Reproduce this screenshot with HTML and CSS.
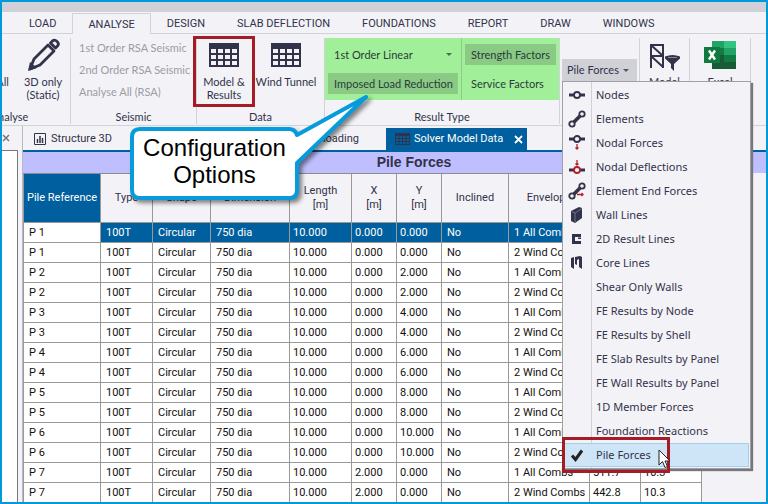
FILE: index.html
```html
<!DOCTYPE html>
<html lang="en">
<head>
<meta charset="utf-8">
<title>Solver Model Data</title>
<link rel="stylesheet" href="styles.css">
</head>
<body>
<svg class="defs" aria-hidden="true">
  <symbol id="grid" viewBox="0 0 30 24"><path fill="currentColor" fill-rule="evenodd" d="M0 0h30v24H0zM2 6v4h5V6zM9 6v4h5V6zM16 6v4h5V6zM23 6v4h5V6zM2 12v4h5v-4zM9 12v4h5v-4zM16 12v4h5v-4zM23 12v4h5v-4zM2 18v4h5v-4zM9 18v4h5v-4zM16 18v4h5v-4zM23 18v4h5v-4z"/></symbol>
</svg>
<div class="frame">
  <div class="titlebar"></div>
  <nav class="tabs">
    <a href="#">LOAD</a><a href="#" class="active">ANALYSE</a><a href="#">DESIGN</a><a href="#">SLAB DEFLECTION</a><a href="#">FOUNDATIONS</a><a href="#">REPORT</a><a href="#">DRAW</a><a href="#">WINDOWS</a>
  </nav>
  <div class="ribbon">
    <section class="group analyse">
      <div class="tools">
        <button class="big"><svg width="36" height="34" viewBox="0 0 36 34"><path d="M34 12l2 1-1 3-2-1z" fill="#32324a"/></svg><span>Analyse All<br>(Static)</span></button>
        <button class="big"><svg width="34" height="34" viewBox="0 0 34 34"><path d="M22 7L8 21 4 31l10-4 14-14z" fill="none" stroke="#32324a" stroke-width="2.8" stroke-linejoin="round"/><path d="M2 33l2-9 7 6z" fill="#32324a"/><path d="M24.500 5l2-2q2-2 4.500.5t.5 4.500l-2 2z" fill="none" stroke="#32324a" stroke-width="2.800" stroke-linejoin="round"/></svg><span>3D only<br>(Static)</span></button>
      </div>
      <h2>Analyse</h2>
    </section>
    <section class="group seismic">
      <div class="links">
        <button disabled>1st Order RSA Seismic</button>
        <button disabled>2nd Order RSA Seismic</button>
        <button disabled>Analyse All (RSA)</button>
      </div>
      <h2>Seismic</h2>
    </section>
    <section class="group data">
      <div class="tools">
        <button class="big marked"><svg width="30" height="34" viewBox="0 0 30 34"><use href="#grid" width="30" height="24" y="5"/></svg><span>Model &amp;<br>Results</span></button>
        <button class="big wind"><svg width="30" height="34" viewBox="0 0 30 34"><use href="#grid" width="30" height="24" y="5"/></svg><span>Wind Tunnel</span></button>
      </div>
      <h2>Data</h2>
    </section>
    <section class="group result">
      <div class="options">
        <div class="column">
          <div class="picker"><select aria-label="Analysis type"><option>1st Order Linear</option></select></div>
          <button class="on">Imposed Load Reduction</button>
        </div>
        <div class="column">
          <button class="on">Strength Factors</button>
          <button>Service Factors</button>
        </div>
      </div>
      <h2>Result Type</h2>
    </section>
    <section class="group view">
      <div class="dropdown">
        <button class="toggle" aria-expanded="true">Pile Forces</button>
        <div class="menu" role="menu">
          <button role="menuitem"><svg viewBox="0 0 18 18"><path d="M1 9h5M12 9h5" stroke-width="3"/><circle cx="9" cy="9" r="3"/></svg>Nodes</button>
          <button role="menuitem"><svg viewBox="0 0 18 18"><path d="M6 12l6-6" stroke-width="3.500"/><circle cx="4" cy="14" r="2.700"/><circle cx="14" cy="4" r="2.700"/></svg>Elements</button>
          <button role="menuitem"><svg viewBox="0 0 18 18"><path d="M1 5h5M12 5h5" stroke-width="3"/><circle cx="9" cy="5" r="3"/><path class="red" d="M9 10v5M7.500 13.500L9 15l1.500-1.500"/></svg>Nodal Forces</button>
          <button role="menuitem"><svg viewBox="0 0 18 18"><path d="M1 12h5M12 12h5" stroke-width="3"/><circle class="ring" cx="9" cy="12" r="3"/><path class="red" d="M9 2v5M7.500 5.500L9 7l1.500-1.500"/></svg>Nodal Deflections</button>
          <button role="menuitem"><svg viewBox="0 0 18 18"><path d="M6 12l6-6" stroke-width="3.500"/><circle cx="4" cy="14" r="2.700"/><circle cx="14" cy="4" r="2.700"/><path class="red" d="M9 12.500h6M13.500 11l1.500 1.500-1.500 1.500"/></svg>Element End Forces</button>
          <button role="menuitem"><svg viewBox="0 0 18 18"><path class="solid" d="M3 5l8-4 3 1v10l-7 5-4-2z"/><path class="cut" d="M3.500 5.500l3.500 1.500 7-4.500M7 7v9"/></svg>Wall Lines</button>
          <button role="menuitem"><svg viewBox="0 0 18 18"><path class="solid" d="M4 4h9v3H7v4h6v3H4z"/><path class="solid" d="M10 7.500h3v1.500h-3z"/></svg>2D Result Lines</button>
          <button role="menuitem"><svg viewBox="0 0 18 18"><path class="solid" d="M3 4l3-1v12l-3-2zM7 3l5-1 2 1v12l-3-2V5L9 6v5L7 10z"/></svg>Core Lines</button>
          <button role="menuitem"><svg viewBox="0 0 18 18"></svg>Shear Only Walls</button>
          <button role="menuitem"><svg viewBox="0 0 18 18"></svg>FE Results by Node</button>
          <button role="menuitem"><svg viewBox="0 0 18 18"></svg>FE Results by Shell</button>
          <button role="menuitem"><svg viewBox="0 0 18 18"></svg>FE Slab Results by Panel</button>
          <button role="menuitem"><svg viewBox="0 0 18 18"></svg>FE Wall Results by Panel</button>
          <button role="menuitem"><svg viewBox="0 0 18 18"></svg>1D Member Forces</button>
          <button role="menuitem"><svg viewBox="0 0 18 18"></svg>Foundation Reactions</button>
          <button role="menuitem" class="current"><svg viewBox="0 0 18 18"><path class="check" d="M4 9.500l3.500 4L14 4.500"/></svg>Pile Forces</button>
          <svg class="cursor" width="13" height="20" viewBox="0 0 13 20"><path d="M1 1v15l3.500-3.500L7 18.500l2.500-1-2.500-5.500h5z" fill="#fff" stroke="#222" stroke-width="1"/></svg>
        </div>
      </div>
    </section>
    <section class="group filter">
      <div class="tools">
        <button class="big"><svg width="30" height="34" viewBox="0 0 30 34"><path d="M1 6v24M13 6v24M0 7h14M0 18h14M1 7l12 11M1 18l12 11" fill="none" stroke="#32324a" stroke-width="2"/><path d="M15 18.500q7.500-3 15 0v2L24 26v7l-3-3v-4l-6-5.500z" fill="#32324a"/><path d="M18 19.500h9" stroke="#888894"/></svg><span>Model<br>Filter</span></button>
      </div>
    </section>
    <section class="group excel">
      <div class="tools">
        <button class="big"><svg width="32" height="34" viewBox="0 0 32 34"><path fill="#21a366" d="M8 3h12v14H8z"/><path fill="#33c481" d="M20 3h12v7H20z"/><path fill="#21a366" d="M20 10h12v7H20z"/><path fill="#107c41" d="M8 10h12v7H8zM20 17h12v7H20z"/><path fill="#185c37" d="M8 17h12v7h12v7H8z"/><path fill="#10793f" d="M0 9h16v16H0z"/><path d="M5 12.500l6 9M11 12.500l-6 9" stroke="#fff" stroke-width="2.400"/></svg><span>Excel</span></button>
      </div>
    </section>
  </div>
  <main class="work">
    <aside class="side">
      <button class="close" aria-label="Close panel"><svg width="8" height="8" viewBox="0 0 8 8"><path d="M1 1l6 6M7 1L1 7" stroke="#777" stroke-width="1.500"/></svg></button>
      <div class="sheet"></div>
    </aside>
    <section class="document">
      <div class="doctabs">
        <a href="#" class="structure"><svg width="12" height="12" viewBox="0 0 12 12"><path d="M.5.500h11v11H.5z" fill="none" stroke="#32324a"/><path d="M3.500 10V6M6 10V3M8.500 10V5" stroke="#32324a" stroke-width="1.500"/></svg>Structure 3D</a>
        <a href="#" class="loading">1 loading</a>
        <a href="#" class="active"><svg width="15" height="12" viewBox="0 0 30 24"><use href="#grid"/></svg>Solver Model Data<svg class="x" width="9" height="9" viewBox="0 0 9 9"><path d="M1 1l7 7M8 1L1 8" stroke="#fff" stroke-width="1.800"/></svg></a>
      </div>
      <h1>Pile Forces</h1>
      <table>
        <colgroup><col class="c-ref"><col class="c-type"><col class="c-shape"><col class="c-dim"><col class="c-len"><col class="c-xy"><col class="c-xy"><col class="c-inc"><col class="c-env"><col class="c-f1"><col class="c-f2"></colgroup>
        <thead><tr><th class="selected">Pile Reference</th><th>Type</th><th>Shape</th><th>Dimension</th><th>Length<br>[m]</th><th>X<br>[m]</th><th>Y<br>[m]</th><th>Inclined</th><th>Envelope</th><th></th><th></th></tr></thead>
        <tbody>
          <tr class="selected"><td>P 1</td><td>100T</td><td>Circular</td><td>750 dia</td><td>10.000</td><td>0.000</td><td>0.000</td><td>No</td><td>1 All Combs</td><td></td><td></td></tr>
          <tr><td>P 1</td><td>100T</td><td>Circular</td><td>750 dia</td><td>10.000</td><td>0.000</td><td>0.000</td><td>No</td><td>2 Wind Combs</td><td></td><td></td></tr>
          <tr><td>P 2</td><td>100T</td><td>Circular</td><td>750 dia</td><td>10.000</td><td>0.000</td><td>2.000</td><td>No</td><td>1 All Combs</td><td></td><td></td></tr>
          <tr><td>P 2</td><td>100T</td><td>Circular</td><td>750 dia</td><td>10.000</td><td>0.000</td><td>2.000</td><td>No</td><td>2 Wind Combs</td><td></td><td></td></tr>
          <tr><td>P 3</td><td>100T</td><td>Circular</td><td>750 dia</td><td>10.000</td><td>0.000</td><td>4.000</td><td>No</td><td>1 All Combs</td><td></td><td></td></tr>
          <tr><td>P 3</td><td>100T</td><td>Circular</td><td>750 dia</td><td>10.000</td><td>0.000</td><td>4.000</td><td>No</td><td>2 Wind Combs</td><td></td><td></td></tr>
          <tr><td>P 4</td><td>100T</td><td>Circular</td><td>750 dia</td><td>10.000</td><td>0.000</td><td>6.000</td><td>No</td><td>1 All Combs</td><td></td><td></td></tr>
          <tr><td>P 4</td><td>100T</td><td>Circular</td><td>750 dia</td><td>10.000</td><td>0.000</td><td>6.000</td><td>No</td><td>2 Wind Combs</td><td></td><td></td></tr>
          <tr><td>P 5</td><td>100T</td><td>Circular</td><td>750 dia</td><td>10.000</td><td>0.000</td><td>8.000</td><td>No</td><td>1 All Combs</td><td></td><td></td></tr>
          <tr><td>P 5</td><td>100T</td><td>Circular</td><td>750 dia</td><td>10.000</td><td>0.000</td><td>8.000</td><td>No</td><td>2 Wind Combs</td><td></td><td></td></tr>
          <tr><td>P 6</td><td>100T</td><td>Circular</td><td>750 dia</td><td>10.000</td><td>0.000</td><td>10.000</td><td>No</td><td>1 All Combs</td><td></td><td></td></tr>
          <tr><td>P 6</td><td>100T</td><td>Circular</td><td>750 dia</td><td>10.000</td><td>0.000</td><td>10.000</td><td>No</td><td>2 Wind Combs</td><td></td><td></td></tr>
          <tr><td>P 7</td><td>100T</td><td>Circular</td><td>750 dia</td><td>10.000</td><td>2.000</td><td>0.000</td><td>No</td><td>1 All Combs</td><td>511.7</td><td>10.3</td></tr>
          <tr><td>P 7</td><td>100T</td><td>Circular</td><td>750 dia</td><td>10.000</td><td>2.000</td><td>0.000</td><td>No</td><td>2 Wind Combs</td><td>442.8</td><td>10.3</td></tr>
        </tbody>
      </table>
    </section>
  </main>
  <div class="callout">
    <svg width="246" height="112" viewBox="0 0 246 112"><path d="M10 35h149q6 0 8 6L236 3 167 69v27q0 8-8 8H10q-8 0-8-8V43q0-8 8-8z" fill="#fff" stroke="#069bdb" stroke-width="4" stroke-linejoin="round"/></svg>
    <p>Configuration<br>Options</p>
  </div>
</div>
</body>
</html>
```
FILE: styles.css
```css
:root {
  --ui: Roboto, "Liberation Sans", sans-serif;
  --ribbon: Lato, Roboto, sans-serif;
  --ink: #32324a;
  --panel: #f3f3f7;
  --rule: #d2d3d9;
  --blue: #005f9e;
  --red: #a51c27;
}

*, *::after { box-sizing: border-box; }

body {
  margin: 0;
  font: 11px/14px var(--ui);
  color: var(--ink);
}

button, select {
  margin: 0;
  padding: 0;
  border: 0;
  background: none;
  font: inherit;
  color: inherit;
  white-space: nowrap;
}

a { color: inherit; text-decoration: none; }
h1, h2, p { margin: 0; }
svg { flex: none; }
.defs { position: absolute; width: 0; height: 0; }

.frame {
  position: relative;
  display: flex;
  flex-direction: column;
  height: 100vh;
  border: 2px solid #009ada;
  background: var(--panel);
  overflow: hidden;
}

.titlebar { flex: none; height: 10px; background: #d0d1d6; }

.tabs {
  display: flex;
  flex: none;
  height: 22px;
  padding-left: 11px;
  border-bottom: 1px solid var(--rule);
}
.tabs a { padding: 5px 16px 0; white-space: nowrap; }
.tabs .active {
  margin-top: 1px;
  margin-bottom: -1px;
  padding: 4px 15px 0;
  border: 1px solid var(--rule);
  border-bottom: 0;
  background: var(--panel);
}

.ribbon {
  display: flex;
  flex: none;
  height: 92px;
  margin-left: -53px;
  padding-top: 4px;
  border-bottom: 1px solid var(--rule);
  font-family: var(--ribbon);
}
.group {
  position: relative;
  display: flex;
  flex-direction: column;
  justify-content: space-between;
  flex: none;
  height: 86px;
  border-right: 1px solid var(--rule);
}
.group h2 {
  font-size: 11px;
  font-weight: normal;
  line-height: 14px;
  text-align: center;
}
.analyse { width: 122px; }
.seismic { width: 126px; }
.data { width: 128px; }
.result { width: 235px; }
.view { width: 80px; }
.filter { width: 50px; }
.excel { width: 61px; }

.tools { display: flex; }
.big {
  display: flex;
  flex: 1;
  flex-direction: column;
  align-items: center;
  line-height: 13px;
}
.big span { margin-top: 3px; }
.analyse .big { flex: none; width: 54px; }
.analyse .big:first-child { width: 67px; }
.marked { position: relative; flex: none; width: 62px; margin-left: -4px; }
.wind { flex: none; width: 62px; }
.marked::after {
  content: "";
  position: absolute;
  top: -2px;
  left: 0;
  height: 71px;
  width: 62px;
  border: 3px solid var(--red);
}

.links {
  display: flex;
  flex-direction: column;
  align-items: flex-start;
  gap: 8px;
  padding: 3px 0 0 8px;
  color: #9c9ca2;
}
.links button { color: inherit; line-height: 14px; }

.options {
  display: flex;
  height: 62px;
  background: #a1f099;
}
.column {
  display: flex;
  flex-direction: column;
  align-items: stretch;
  gap: 8px;
  padding: 6px 3px;
}
.column:first-child { width: 137px; border-right: 1px solid #8fc98b; }
.column:last-child { flex: 1; }
.column button, .picker { height: 22px; padding: 0 6px; text-align: left; color: #2b3b3e; }
.column .on { background: #8aca84; }
.picker { display: flex; align-items: center; }
.picker select { flex: 1; appearance: none; }
.picker::after, .toggle::after {
  content: "";
  border: 3px solid transparent;
  border-top-color: #4f6a52;
  border-bottom: 0;
}

.dropdown { position: relative; margin: 21px 1px 0 2px; }
.toggle {
  display: flex;
  align-items: center;
  justify-content: space-between;
  width: 75px;
  height: 22px;
  padding: 0 8px 0 5px;
  background: #d0d1d7;
}
.toggle::after { border-top-color: #55555f; }

.menu {
  position: absolute;
  z-index: 2;
  top: 22px;
  left: 0;
  width: 189px;
  padding: 1px;
  border: 1px solid #a0a0a4;
  background: linear-gradient(90deg, transparent 28px, #d0d1d7 28px, #d0d1d7 29px, transparent 29px) var(--panel);
  box-shadow: 2px 2px 1px #77777b;
  font-family: "Noto Sans", "Open Sans", sans-serif;
}
.menu button {
  display: flex;
  align-items: center;
  gap: 10px;
  width: 100%;
  height: 24px;
  padding-left: 3px;
  border: 1px solid transparent;
}
.menu button svg { width: 18px; height: 18px; fill: none; stroke: var(--ink); stroke-width: 1.8; }
.menu svg .red, .menu svg .ring { stroke: #b3202d; }
.menu svg .red { stroke-width: 1.3; }
.menu svg .solid { fill: var(--ink); stroke: none; }
.menu svg .cut { stroke: #8c8c98; stroke-width: .7; }
.menu svg .check { stroke: #222; stroke-width: 3; }
.menu .current { position: relative; background: #cde5f6; border-color: #a6cdec; }
.menu .current::after {
  content: "";
  position: absolute;
  top: -7px;
  left: -3px;
  width: 108px;
  height: 36px;
  border: 3px solid var(--red);
}
.menu .cursor { position: absolute; right: 79px; bottom: -1px; }

.work { display: flex; flex: 1; min-height: 0; }
.side {
  display: flex;
  flex: none;
  flex-direction: column;
  width: 16px;
}
.close { height: 24px; line-height: 0; text-align: left; }
.sheet { flex: 1; border: solid #77777b; border-width: 1px 1px 0 0; background: #fff; }
.document { flex: 1; min-width: 0; margin-left: 4px; border-left: 1px solid #b9bac0; }

.doctabs {
  display: flex;
  height: 26px;
  padding-top: 2px;
  border-bottom: 2px solid var(--blue);
}
.doctabs a { display: flex; align-items: center; gap: 5px; white-space: nowrap; }
.structure { width: 277px; padding-left: 11px; }
.loading { width: 86px; padding-left: 14px; }
.doctabs .active { gap: 4px; width: 141px; padding: 0 4px 0 9px; background: var(--blue); color: #fff; }
.doctabs .active svg { color: #32324a; }
.doctabs .x { margin-left: auto; }

h1 {
  height: 21px;
  padding-left: 39px;
  background: #bfbfff;
  font: bold 14px/21px "Liberation Sans", sans-serif;
  text-align: center;
}

table {
  width: 679px;
  table-layout: fixed;
  border-spacing: 0;
  border-top: 1px solid #8c8c90;
  border-left: 1px solid #999;
}
.c-ref { width: 77px; }
.c-type { width: 52px; }
.c-shape { width: 58px; }
.c-dim { width: 79px; }
.c-len { width: 62px; }
.c-xy { width: 45px; }
.c-inc { width: 67px; }
.c-env { width: 81px; }
.c-f1 { width: 51px; }
.c-f2 { width: 61px; }
th, td {
  padding: 0 5px;
  border: solid #999;
  border-width: 0 1px 1px 0;
  white-space: nowrap;
  overflow: hidden;
}
th { height: 49px; padding: 0; font-weight: normal; }
td { height: 20px; background: #fff; color: #111; }
td:nth-child(n+5):nth-child(-n+7), td:nth-child(n+10) { padding: 0 3px; }
tr.selected td:nth-child(n+2), th.selected { background: var(--blue); color: #fff; }

.callout { position: absolute; z-index: 1; top: 92px; left: 128px; }
.callout svg { display: block; filter: drop-shadow(3px 3px 2px #0007); }
.callout p {
  position: absolute;
  top: 40px;
  left: 4px;
  width: 161px;
  font: 24px/27px "Liberation Sans", sans-serif;
  color: #000;
  text-align: center;
}
```
